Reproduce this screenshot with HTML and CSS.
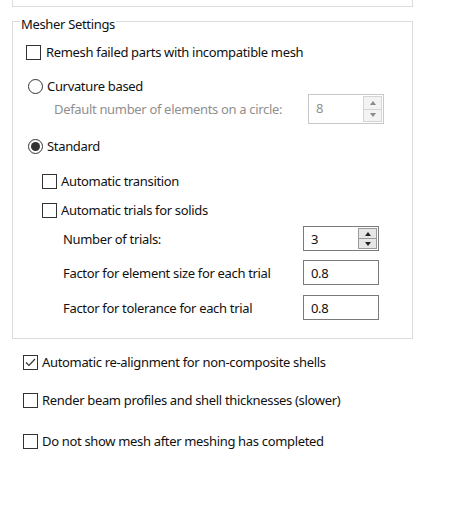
FILE: index.html
```html
<!DOCTYPE html>
<html lang="en">
<head>
    <meta charset="UTF-8">
    <title>Mesher Settings</title>
    <link rel="stylesheet" href="styles.css">
</head>
<body>
    <div class="top-box"></div>

    <fieldset class="group">
        <legend>Mesher Settings</legend>

        <div class="row row-remesh">
            <span class="box"></span>
            <span>Remesh failed parts with incompatible mesh</span>
        </div>

        <div class="row row-curv">
            <span class="radio"></span>
            <span>Curvature based</span>
        </div>

        <div class="field field-circle">
            <span class="label disabled">Default number of elements on a circle:</span>
            <div class="spin spin-off">
                <span class="value">8</span>
                <div class="buttons">
                    <span class="up"></span>
                    <span class="down"></span>
                </div>
            </div>
        </div>

        <div class="row row-standard">
            <span class="radio on"></span>
            <span>Standard</span>
        </div>

        <div class="row row-trans">
            <span class="box"></span>
            <span>Automatic transition</span>
        </div>

        <div class="row row-trials">
            <span class="box"></span>
            <span>Automatic trials for solids</span>
        </div>

        <div class="field field-sub first">
            <span class="label">Number of trials:</span>
            <div class="spin">
                <span class="value">3</span>
                <div class="buttons">
                    <span class="up"></span>
                    <span class="down"></span>
                </div>
            </div>
        </div>

        <div class="field field-sub">
            <span class="label">Factor for element size for each trial</span>
            <div class="text-input">0.8</div>
        </div>

        <div class="field field-sub last">
            <span class="label">Factor for tolerance for each trial</span>
            <div class="text-input">0.8</div>
        </div>
    </fieldset>

    <div class="row outer row-align">
        <span class="box checked">
            <svg width="13" height="13" viewBox="0 0 13 13"><path d="M2 6.5 L5 9.5 L11 3" fill="none" stroke="#333" stroke-width="1.2"/></svg>
        </span>
        <span>Automatic re-alignment for non-composite shells</span>
    </div>

    <div class="row outer row-beam">
        <span class="box"></span>
        <span>Render beam profiles and shell thicknesses (slower)</span>
    </div>

    <div class="row outer row-hide">
        <span class="box"></span>
        <span>Do not show mesh after meshing has completed</span>
    </div>
</body>
</html>
```

FILE: styles.css
```css
body {
    margin: 0;
    background: #fff;
    font-family: "Noto Sans", "Open Sans", sans-serif;
    font-size: 13px;
    letter-spacing: -0.33px;
    color: #111;
}

.top-box {
    margin-left: 12px;
    width: 399px;
    height: 6px;
    border: 1px solid #dcdcdc;
    border-top: none;
}

.group {
    margin: 4px 0 0 12px;
    width: 401px;
    box-sizing: border-box;
    padding: 0 0 18px 13px;
    border: 1px solid #dcdcdc;
    min-inline-size: 0;
}

.group legend {
    margin-left: -6px;
    padding: 5px 1px 0;
    height: 16px;
    line-height: 16px;
}

.row {
    display: flex;
    align-items: center;
    gap: 5px;
    height: 20px;
}

.box {
    width: 15px;
    height: 15px;
    box-sizing: border-box;
    border: 1px solid #333;
    background: #fff;
    display: flex;
    align-items: center;
    justify-content: center;
    flex: none;
}

.radio {
    width: 15px;
    height: 15px;
    box-sizing: border-box;
    border: 1px solid #333;
    border-radius: 50%;
    display: flex;
    align-items: center;
    justify-content: center;
    flex: none;
}

.radio.on::after {
    content: "";
    width: 9px;
    height: 9px;
    border-radius: 50%;
    background: #333;
}

.row-remesh { margin-top: 10px; }
.row-curv { margin-top: 16px; height: 16px; padding-left: 2px; gap: 4px; }
.row-standard { margin-top: 12px; padding-left: 2px; gap: 4px; }
.row-trans { margin-top: 15px; padding-left: 16px; gap: 4px; }
.row-trials { margin-top: 9px; padding-left: 16px; gap: 4px; }

.field {
    display: flex;
    align-items: center;
    justify-content: space-between;
    box-sizing: border-box;
}

.field-circle {
    margin-top: 0;
    height: 30px;
    padding-left: 28px;
    width: 358px;
}

.field-sub {
    margin-top: 9px;
    height: 25px;
    padding-left: 37px;
    width: 353px;
}

.field-sub.first { margin-top: 6px; }
.field-sub.last { margin-top: 10px; }

.label.disabled {
    color: #8f8f8f;
}

.spin,
.text-input {
    box-sizing: border-box;
    width: 76px;
    height: 25px;
    border: 1px solid #7a7a7a;
    display: flex;
    align-items: center;
    background: #fff;
}

.text-input {
    padding-left: 7px;
}

.spin .value {
    flex: 1;
    padding-left: 7px;
}

.spin-off {
    height: 30px;
    border-color: #c8c8c8;
    color: #8f8f8f;
}

.spin-off .value {
    align-self: flex-start;
    padding-top: 4px;
}

.buttons {
    width: 20px;
    height: 100%;
    display: flex;
    flex-direction: column;
    padding: 1px 1px 1px 0;
    box-sizing: border-box;
}

.buttons span {
    flex: 1;
    background: #e6e6e6;
    border: 1px solid #9a9a9a;
    display: flex;
    align-items: center;
    justify-content: center;
}

.buttons span + span {
    border-top: none;
}

.buttons .up::after {
    content: "";
    border: 3.5px solid transparent;
    border-bottom: 4px solid #222;
    border-top: none;
}

.buttons .down::after {
    content: "";
    border: 3.5px solid transparent;
    border-top: 4px solid #222;
    border-bottom: none;
}

.spin-off .buttons span {
    background: #f3f3f3;
    border-color: #d4d4d4;
}

.spin-off .buttons .up::after { border-bottom-color: #8a8a8a; }
.spin-off .buttons .down::after { border-top-color: #8a8a8a; }

.outer {
    padding-left: 23px;
    gap: 4px;
}

.row-align { margin-top: 13px; }
.row-beam { margin-top: 18px; }
.row-hide { margin-top: 21px; }
```
